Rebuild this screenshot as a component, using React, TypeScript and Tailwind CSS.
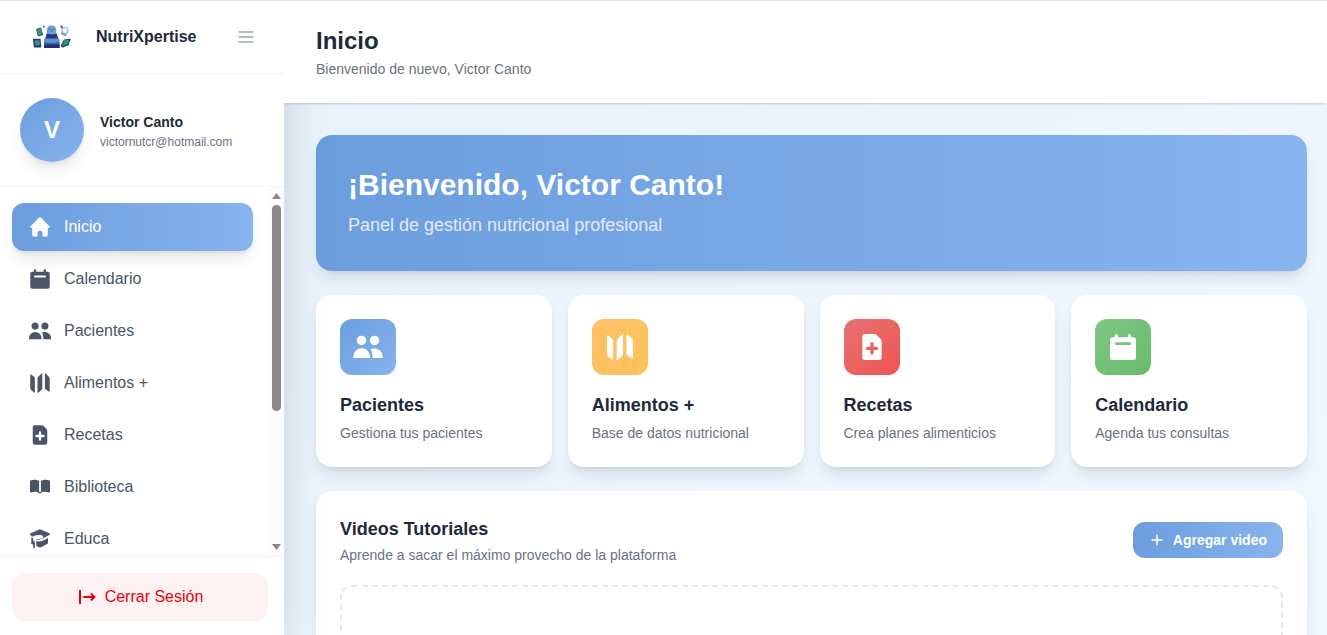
import type { ReactNode } from "react";

type IconProps = { className?: string };

function Svg({ className, children }: { className?: string; children: ReactNode }) {
  return (
    <svg viewBox="0 0 24 24" fill="currentColor" className={className} aria-hidden="true">
      {children}
    </svg>
  );
}

const HomeIcon = ({ className }: IconProps) => (
  <Svg className={className}>
    <path d="M11.2 2.4a1.2 1.2 0 0 1 1.6 0l9 9c.5.5.2 1.3-.5 1.3H19.800V20a1.600 1.600 0 0 1-1.600 1.600h-3.700v-3.400a2.500 2.500 0 0 0-5 0v3.400H5.800A1.600 1.600 0 0 1 4.200 20v-7.300H2.700c-.7 0-1-.8-.5-1.300z" />
  </Svg>
);

const CalendarIcon = ({ className }: IconProps) => (
  <Svg className={className}>
    <path
      fillRule="evenodd"
      d="M7 2.2a1.200 1.200 0 0 1 1.200 1.200v1.300h7.400V3.400a1.200 1.200 0 0 1 2.400 0v1.300h1.750A2 2 0 0 1 21.750 6.700v13a2 2 0 0 1-2 2H4.250a2 2 0 0 1-2-2v-13a2 2 0 0 1 2-2H5.800V3.400A1.200 1.200 0 0 1 7 2.200zM7 8.500a1 1 0 0 0 0 2h10a1 1 0 0 0 0-2z"
    />
  </Svg>
);

const UsersIcon = ({ className }: IconProps) => (
  <Svg className={className}>
    <circle cx="7.1" cy="7.1" r="3.550" />
    <circle cx="16.900" cy="7.1" r="3.550" />
    <path d="M1 20.250v-1.100a6.250 6.250 0 0 1 12.500 0v1.100z" />
    <path d="M15.300 20.250v-1.300c0-2-.5-4.100-1.300-5.400.9-.4 1.800-.5 2.800-.5a6.200 6.200 0 0 1 6.200 6.200v1z" />
  </Svg>
);

const MapIcon = ({ className }: IconProps) => (
  <Svg className={className}>
    <path d="M2.250 4c0-.7.6-1 1-.6l3 2.600c.4.400.6.8.6 1.300v14c0 .5-.4.700-.8.300l-3-2.600c-.500-.400-.8-.9-.8-1.500z" />
    <path d="M9.500 7.300c0-.5.2-.9.600-1.300l3.400-3.500c.300-.3.800-.1.800.3v14.400c0 .5-.2.9-.5 1.300l-3.500 3.200c-.300.3-.8.1-.8-.3z" />
    <path d="M16.900 2.800c0-.4.500-.6.800-.3L21.100 5.900c.400.400.6.900.6 1.400v12.600c0 .8-.7 1-1.100.6l-3.200-2.400c-.300-.3-.5-.7-.5-1.200z" />
  </Svg>
);

const FilePlusIcon = ({ className }: IconProps) => (
  <Svg className={className}>
    <path
      fillRule="evenodd"
      d="M6.750 2.200h7.300c.5 0 1 .2 1.400.6l3.200 3.500c.400.400.6.9.6 1.400v12a2 2 0 0 1-2 2H6.750a2 2 0 0 1-2-2v-15.500a2 2 0 0 1 2-2zM10.800 9.500v2.300H8.500a1.200 1.200 0 0 0 0 2.400h2.300v2.300a1.200 1.200 0 0 0 2.400 0v-2.300h2.300a1.200 1.200 0 0 0 0-2.400h-2.300V9.500a1.200 1.200 0 0 0-2.400 0z"
    />
  </Svg>
);

const BookIcon = ({ className }: IconProps) => (
  <Svg className={className}>
    <path d="M3 5.300c2.800-.9 5.700-.8 8.100.8v11.400c-2.400-1-5.300-1-8 0-.600.2-1.100-.1-1.100-.7V6.500c0-.6.400-1 1-1.200zM21 5.300c-2.800-.9-5.700-.8-8.100.8v11.400c2.400-1 5.300-1 8 0 .600.2 1.100-.1 1.100-.7V6.500c0-.6-.4-1-1-1.200zM9.800 16.800h4.400c-.2 1-1.100 1.700-2.200 1.700s-2-.7-2.200-1.700z" />
  </Svg>
);

const EducationIcon = ({ className }: IconProps) => (
  <Svg className={className}>
    <path d="M11.200 2.600a2 2 0 0 1 1.600 0l8.600 3.700c.8.400.8 1.200 0 1.600l-7.200 3.900c-2.700 1.400-5.200 1.200-6.700.2l4.300.1c2.300 0 3.700-1 3.400-2.500-.3-1.300-1.900-1.800-3.600-1.700l-3.400.3c-1.600.2-2.900 1-3.600 1.600L2.600 8.200c-.8-.4-.8-1.500 0-1.900z" />
    <path d="M8.300 14.100c3.200.9 5.900.2 8-1l3.700-2.200v4.700c0 .7-.3 1.200-.9 1.500l-5.600 3a3.500 3.500 0 0 1-3 0l-2.200-1.100z" />
    <path d="M3.300 10.200l1.900 1c-.4 1.200-.1 2.300.9 3 .5.400.8.900.8 1.600v4.900c0 .9-1.400.9-1.500 0l-.4-3.300-1.400-.5c-.6-.3-.5-.8-.3-1.300z" />
  </Svg>
);

const LogoutIcon = ({ className }: IconProps) => (
  <svg viewBox="0 0 20 20" fill="none" stroke="currentColor" strokeWidth="2" className={className} aria-hidden="true">
    <path d="M3 3v14M6.300 10H17M13.900 6.500 17.400 10l-3.500 3.500" />
  </svg>
);

const Logo = ({ className }: IconProps) => (
  <svg viewBox="0 0 40 26" className={className} aria-hidden="true">
    <path d="M14.800 9c-.5-5 1-7.500 4.700-7.500S24.700 4 24.200 9l1.300 3h-12z" fill="#6a9ed6" />
    <path d="M16.800 5h1.200M21 5h1.200M18.700 7h1.800" stroke="#27417f" strokeWidth="1" />
    <path d="M15 9.800c3 1 6.300 1 9.500 0l2 5.200H13z" fill="#27357a" />
    <rect x="12" y="14.500" width="15.500" height="9.500" rx="1" fill="#5a93d0" />
    <path d="M12 18c5 1.200 10 1.200 15.500 0v6H12z" fill="#3a5fa6" />
    <path d="M12 20.500h15.500V24H12z" fill="#222f70" />
    <path d="M4 5l5-1.500 2.200 7.500L6 12.500z" fill="#2b4a78" />
    <path d="M4.900 5.600l3.900-1 1.500 5.400-3.800 1.400z" fill="#2f9a75" />
    <path d="M1 14.800h7.500L9.300 23.500H1.800z" fill="#26386c" />
    <path d="M2.500 16.500l5-.3.500 4.800-4.300.8z" fill="#2f9a75" />
    <path d="M32 15.500l7-.8-2.500 6.500-6.500 2.600-1.200-2.400z" fill="#26386c" />
    <path d="M32.300 16.300l5.300-.6-1.900 4.500-5.500 1.800z" fill="#2f9a75" />
    <path d="M28 1.500l2.500.5.500 1.500-1.500 1z" fill="#34488d" />
    <circle cx="33" cy="6.500" r="3" fill="#eef5fd" stroke="#8db5e2" strokeWidth="1.200" />
    <path d="M29 9l4 2.300 1.800-1" fill="none" stroke="#5a93d0" strokeWidth="1.500" />
    <path d="M11 1.700h1.500v1.800H11z" fill="#34488d" />
  </svg>
);

const navItems = [
  { label: "Inicio", Icon: HomeIcon, active: true },
  { label: "Calendario", Icon: CalendarIcon },
  { label: "Pacientes", Icon: UsersIcon },
  { label: "Alimentos +", Icon: MapIcon },
  { label: "Recetas", Icon: FilePlusIcon },
  { label: "Biblioteca", Icon: BookIcon },
  { label: "Educa", Icon: EducationIcon },
];

const cards = [
  { title: "Pacientes", text: "Gestiona tus pacientes", Icon: UsersIcon, tint: "from-[#6b9ddd] to-[#88b4ef]" },
  { title: "Alimentos +", text: "Base de datos nutricional", Icon: MapIcon, tint: "from-[#ffc164] to-[#ffc05e]" },
  { title: "Recetas", text: "Crea planes alimenticios", Icon: FilePlusIcon, tint: "from-[#e57373] to-[#ef5350]" },
  { title: "Calendario", text: "Agenda tus consultas", Icon: CalendarIcon, tint: "from-[#81c784] to-[#66bb6a]" },
];

function Sidebar() {
  return (
    <aside className="z-10 flex w-[284px] shrink-0 flex-col bg-white shadow-2xl">
      <div className="flex h-[73px] shrink-0 items-center justify-between border-b border-gray-100 px-5">
        <div className="flex items-center gap-3">
          <div className="flex w-16 justify-center">
            <Logo className="h-[26px] w-10" />
          </div>
          <span className="font-bold text-gray-800">NutriXpertise</span>
        </div>
        <button type="button" aria-label="Contraer menú" className="flex size-9 items-center justify-center text-[#b0bec5]">
          <svg viewBox="0 0 24 24" fill="none" stroke="currentColor" strokeWidth="2" className="size-6" aria-hidden="true">
            <path d="M4.500 7h15M4.500 12h15M4.500 17h15" />
          </svg>
        </button>
      </div>

      <div className="flex shrink-0 items-center gap-4 border-b border-gray-100 px-5 py-6">
        <div className="flex size-16 items-center justify-center rounded-full bg-linear-to-br from-[#6b9ddd] to-[#88b4ef] text-2xl font-bold text-white shadow-lg">
          V
        </div>
        <div>
          <p className="text-sm/6 font-bold text-gray-800">Victor Canto</p>
          <p className="text-xs text-gray-500">victornutcr@hotmail.com</p>
        </div>
      </div>

      <div className="flex min-h-0 flex-1">
        <nav className="flex flex-1 flex-col gap-1 overflow-y-auto py-4 pr-4 pl-3 [scrollbar-width:none]">
          {navItems.map(({ label, Icon, active }) => (
            <a
              key={label}
              href="#"
              aria-current={active ? "page" : undefined}
              className={
                active
                  ? "flex h-12 shrink-0 items-center gap-3 rounded-xl bg-linear-to-r from-[#6b9ddd] to-[#88b4ef] px-4 text-white shadow-lg"
                  : "flex h-12 shrink-0 items-center gap-3 rounded-xl px-4 text-gray-600"
              }
            >
              <Icon className="size-6" />
              {label}
            </a>
          ))}
        </nav>
        <div aria-hidden="true" className="flex w-[15px] flex-col items-center bg-[#fcfcfc] py-1.5 text-[#8b878b]">
          <svg viewBox="0 0 9 6" fill="currentColor" className="h-1.5 w-[9px]">
            <path d="M4.500 0 9 6H0z" />
          </svg>
          <div className="my-1.5 w-[9px] flex-1">
            <div className="h-[62%] rounded-full bg-[#8b878b]" />
          </div>
          <svg viewBox="0 0 9 6" fill="currentColor" className="h-1.5 w-[9px]">
            <path d="M0 0h9L4.500 6z" />
          </svg>
        </div>
      </div>

      <div className="shrink-0 border-t border-gray-100 pt-4 pr-4 pb-3.5 pl-3">
        <button type="button" className="flex h-12 w-full items-center justify-center gap-2 rounded-xl bg-red-50 text-red-600">
          <LogoutIcon className="size-5" />
          Cerrar Sesión
        </button>
      </div>
    </aside>
  );
}

export default function App() {
  return (
    <div className="flex h-screen overflow-hidden border-t border-[#e0e0e0] bg-white font-['Liberation_Sans',Arial,sans-serif]">
      <Sidebar />
      <div className="flex min-w-0 flex-1 flex-col bg-linear-to-br from-[#e8f2fb] to-[#f2f7ff]">
        <header className="z-20 shrink-0 bg-white px-8 py-6 shadow-[0_2px_2px_-1px_rgba(0,0,0,0.18)]">
          <h1 className="text-2xl font-bold text-gray-800">Inicio</h1>
          <p className="mt-0.5 text-sm text-gray-500">Bienvenido de nuevo, Victor Canto</p>
        </header>

        <main className="flex min-h-0 flex-1 flex-col gap-6 overflow-y-auto pt-8 pr-5 pb-8 pl-8 [scrollbar-width:none]">
          <section className="shrink-0 rounded-2xl bg-linear-to-r from-[#6b9ddd] to-[#88b4ef] p-8 text-white shadow-lg">
            <h2 className="text-3xl font-bold">¡Bienvenido, Victor Canto!</h2>
            <p className="mt-2 text-lg text-white/80">Panel de gestión nutricional profesional</p>
          </section>

          <section className="grid shrink-0 grid-cols-4 gap-4">
            {cards.map(({ title, text, Icon, tint }) => (
              <a key={title} href="#" className="rounded-2xl bg-white p-6 shadow-lg">
                <div className={`flex size-14 items-center justify-center rounded-xl bg-linear-to-br text-white ${tint}`}>
                  <Icon className="size-8" />
                </div>
                <h3 className="mt-4 text-lg font-bold text-gray-800">{title}</h3>
                <p className="mt-1 text-sm text-gray-500">{text}</p>
              </a>
            ))}
          </section>

          <section className="shrink-0 rounded-2xl bg-white p-6 shadow-lg">
            <div className="flex items-center justify-between">
              <div>
                <h3 className="text-lg font-bold text-gray-800">Videos Tutoriales</h3>
                <p className="mt-0.5 text-sm text-gray-500">Aprende a sacar el máximo provecho de la plataforma</p>
              </div>
              <button
                type="button"
                className="flex h-9 items-center gap-2 rounded-xl bg-linear-to-r from-[#6b9ddd] to-[#88b4ef] px-4 text-sm font-bold text-white"
              >
                <svg viewBox="0 0 16 16" fill="none" stroke="currentColor" strokeWidth="1.500" className="size-4" aria-hidden="true">
                  <path d="M8 2.500v11M2.500 8h11" />
                </svg>
                Agregar video
              </button>
            </div>
            <div className="mt-5 h-48 rounded-xl border-2 border-dashed border-gray-200" />
          </section>
        </main>
      </div>
    </div>
  );
}
